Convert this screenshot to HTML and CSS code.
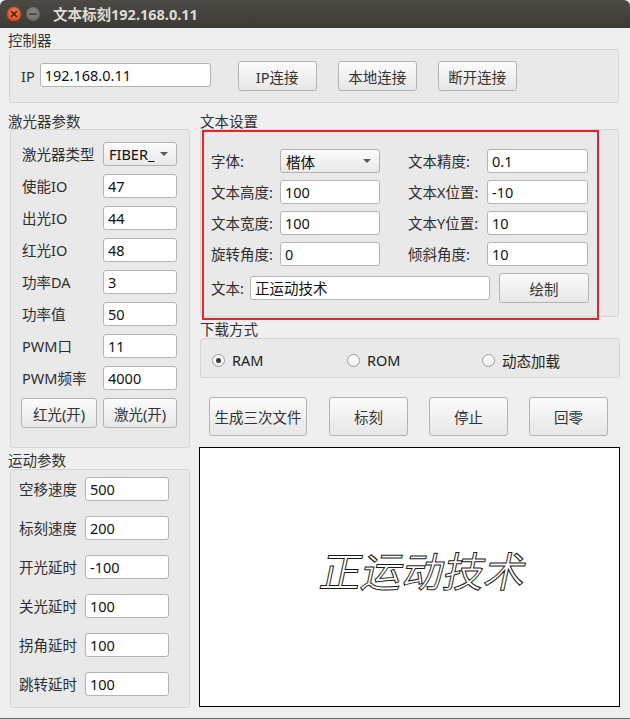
FILE: index.html
```html
<!DOCTYPE html>
<html lang="zh">
<head>
<meta charset="utf-8">
<title>文本标刻192.168.0.11</title>
<link rel="stylesheet" href="styles.css">
</head>
<body>
<div class="titlebar">
  <span class="wbtn close"><svg width="14" height="14" viewBox="0 0 14 14"><path d="M4.6 4.6 L9.4 9.4 M9.4 4.6 L4.6 9.4" stroke="#3a2a24" stroke-width="1.5" stroke-linecap="round"/></svg></span>
  <span class="wbtn min"><svg width="14" height="14" viewBox="0 0 14 14"><path d="M4 7 H10" stroke="#3b3a36" stroke-width="1.6" stroke-linecap="round"/></svg></span>
  <span class="wtitle">文本标刻192.168.0.11</span>
</div>

<div class="gtitle ctrl-title">控制器</div>
<div class="gbox ctrl">
  <span class="ip-label">IP</span>
  <div class="field ip-field">192.168.0.11</div>
  <button class="btn ctrl-btn first">IP连接</button>
  <button class="btn ctrl-btn">本地连接</button>
  <button class="btn ctrl-btn">断开连接</button>
</div>

<div class="main">
  <div class="col">
    <div class="gtitle sub">激光器参数</div>
    <div class="gbox laser">
      <span class="lbl">激光器类型</span>
      <div class="combo"><span>FIBER_</span><i class="arrow"></i></div>
      <span class="lbl">使能IO</span><div class="field">47</div>
      <span class="lbl">出光IO</span><div class="field">44</div>
      <span class="lbl">红光IO</span><div class="field">48</div>
      <span class="lbl">功率DA</span><div class="field">3</div>
      <span class="lbl">功率值</span><div class="field">50</div>
      <span class="lbl">PWM口</span><div class="field">11</div>
      <span class="lbl">PWM频率</span><div class="field">4000</div>
      <button class="btn laser-btn red">红光(开)</button>
      <button class="btn laser-btn">激光(开)</button>
    </div>

    <div class="gtitle sub2">运动参数</div>
    <div class="gbox motion">
      <span class="lbl">空移速度</span><div class="field">500</div>
      <span class="lbl">标刻速度</span><div class="field">200</div>
      <span class="lbl">开光延时</span><div class="field">-100</div>
      <span class="lbl">关光延时</span><div class="field">100</div>
      <span class="lbl">拐角延时</span><div class="field">100</div>
      <span class="lbl">跳转延时</span><div class="field">100</div>
    </div>
  </div>

  <div class="col">
    <div class="gtitle sub">文本设置</div>
    <div class="gbox textset">
      <div class="tgrid">
        <span class="lbl">字体:</span>
        <div class="combo"><span>楷体</span><i class="arrow"></i></div>
        <span class="lbl lbl2">文本精度:</span><div class="field">0.1</div>

        <span class="lbl">文本高度:</span><div class="field">100</div>
        <span class="lbl lbl2">文本X位置:</span><div class="field">-10</div>

        <span class="lbl">文本宽度:</span><div class="field">100</div>
        <span class="lbl lbl2">文本Y位置:</span><div class="field">10</div>

        <span class="lbl">旋转角度:</span><div class="field">0</div>
        <span class="lbl lbl2">倾斜角度:</span><div class="field">10</div>
      </div>
      <div class="textrow">
        <span class="lbl text-lbl">文本:</span>
        <div class="field text-field">正运动技术</div>
        <button class="btn draw-btn">绘制</button>
      </div>
      <div class="highlight"></div>
    </div>

    <div class="gtitle sub2">下载方式</div>
    <div class="gbox download">
      <label class="radio"><span class="dot checked"></span>RAM</label>
      <label class="radio"><span class="dot"></span>ROM</label>
      <label class="radio"><span class="dot"></span>动态加载</label>
    </div>

    <div class="actions">
      <button class="btn act wide">生成三次文件</button>
      <button class="btn act">标刻</button>
      <button class="btn act">停止</button>
      <button class="btn act">回零</button>
    </div>

    <div class="canvas">
      <span class="preview">正运动技术</span>
    </div>
  </div>
</div>
</body>
</html>
```

FILE: styles.css
```css
* { box-sizing: border-box; }

body {
  margin: 0;
  width: 630px;
  height: 719px;
  overflow: hidden;
  background: #efefef;
  border-bottom: 1px solid #6a6a6a;
  font-family: "Noto Sans", "Noto Sans CJK SC", sans-serif;
  font-size: 14.5px;
  color: #333;
}

/* title bar */
.titlebar {
  height: 28px;
  background: linear-gradient(#4b4a45, #3c3b37);
  border-radius: 6px 6px 0 0;
  display: flex;
  align-items: center;
  padding-left: 7px;
}
.wbtn {
  width: 14px;
  height: 14px;
  border-radius: 50%;
  display: flex;
}
.wbtn.close {
  background: radial-gradient(circle at 50% 40%, #f6835d, #e04a20 70%);
  box-shadow: 0 0 0 0.5px #9c3a1c;
}
.wbtn.min {
  margin-left: 5px;
  background: radial-gradient(circle at 50% 40%, #8d8b86, #6e6c68 70%);
  box-shadow: 0 0 0 0.5px #34332f;
}
.wtitle {
  margin-left: 13px;
  color: #dfdbd2;
  font-weight: bold;
  font-size: 14.5px;
  line-height: 18px;
}

/* group titles and boxes */
.gtitle {
  height: 17px;
  line-height: 17px;
  color: #333;
}
.ctrl-title { margin-top: 4px; padding-left: 8px; }
.sub { height: 16px; line-height: 16px; }
.sub2 { margin-top: 4px; }

.gbox {
  background: #e9e9e9;
  border: 1px solid #d5d5d5;
  border-radius: 3px;
}

.lbl {
  line-height: 24px;
  white-space: nowrap;
  color: #2e2e2e;
}

.field {
  height: 24px;
  background: #fff;
  border: 1px solid #b4b4b4;
  border-radius: 3px;
  padding-left: 4px;
  line-height: 22px;
  color: #111;
  white-space: nowrap;
  overflow: hidden;
}

.btn {
  background: linear-gradient(#fbfbfb, #e7e7e7);
  border: 1px solid #b3b3b3;
  border-radius: 3px;
  font-family: inherit;
  font-size: 14.5px;
  color: #333;
  padding: 0;
}

.combo {
  height: 24px;
  background: linear-gradient(#fbfbfb, #e8e8e8);
  border: 1px solid #b3b3b3;
  border-radius: 3px;
  display: flex;
  align-items: center;
  justify-content: space-between;
  padding: 0 8px 0 5px;
  color: #111;
  overflow: hidden;
}
.arrow {
  width: 0;
  height: 0;
  border-left: 4px solid transparent;
  border-right: 4px solid transparent;
  border-top: 4px solid #5a5a5a;
}

/* controller */
.ctrl {
  margin-left: 9px;
  width: 610px;
  height: 54px;
  display: flex;
  align-items: center;
  padding-left: 11px;
}
.ip-label { margin-right: 5px; }
.ip-field { width: 171px; margin-top: -2px; }
.ctrl-btn { width: 79px; height: 30px; margin-left: 21px; }
.ctrl-btn.first { margin-left: 27px; }

/* main area */
.main {
  display: grid;
  grid-template-columns: 182px 420px;
  column-gap: 10px;
  margin-left: 8px;
  margin-top: 10px;
}
.col { display: flex; flex-direction: column; }

.laser {
  margin-left: 2px;
  width: 180px;
  height: 319px;
  padding: 12px 0 0 11px;
  display: grid;
  grid-template-columns: 81px 74px;
  grid-auto-rows: 24px;
  row-gap: 8px;
  align-items: center;
}
.laser-btn { height: 30px; align-self: start; }
.laser-btn.red { width: 76px; margin-left: -1px; }

.motion {
  margin-left: 2px;
  width: 180px;
  height: 239px;
  padding: 7px 0 0 8px;
  display: grid;
  grid-template-columns: 66px 84px;
  grid-auto-rows: 24px;
  row-gap: 15px;
  align-content: start;
}

/* text settings */
.textset {
  position: relative;
  width: 419px;
  height: 188px;
  padding: 19px 0 0 10px;
}
.tgrid {
  display: grid;
  grid-template-columns: 69px 100px 107px 101px;
  grid-auto-rows: 24px;
  row-gap: 7px;
}
.lbl2 { padding-left: 28px; }
.textrow {
  margin-top: 7px;
  display: flex;
  align-items: center;
  height: 30px;
}
.text-lbl { width: 39px; }
.text-field { width: 240px; }
.draw-btn { width: 90px; height: 30px; margin-left: 9px; }

.highlight {
  position: absolute;
  left: 1px;
  top: 0;
  width: 397px;
  height: 190px;
  border: 2px solid #e8222a;
  pointer-events: none;
}

/* download mode */
.download {
  width: 420px;
  height: 40px;
  padding: 4px 0 0 11px;
  display: grid;
  grid-template-columns: 135px 135px 135px;
  align-items: center;
}
.radio {
  display: flex;
  align-items: center;
  gap: 7px;
  color: #222;
}
.dot {
  width: 13px;
  height: 13px;
  border-radius: 50%;
  border: 1px solid #9d9d9d;
  background: linear-gradient(#ffffff, #f0f0f0);
  display: flex;
  align-items: center;
  justify-content: center;
}
.dot.checked::after {
  content: "";
  width: 5px;
  height: 5px;
  border-radius: 50%;
  background: #3a3a3a;
}

/* actions */
.actions {
  margin-top: 19px;
  display: flex;
  padding-left: 9px;
  gap: 21px;
}
.act { width: 79px; height: 39px; }
.act.wide { width: 98px; margin-right: 1px; }

/* preview canvas */
.canvas {
  margin-top: 11px;
  margin-left: -1px;
  width: 421px;
  height: 260px;
  background: #fff;
  border: 1px solid #000;
  display: flex;
  align-items: center;
  justify-content: center;
  padding: 0 0 16px 30px;
}
.preview {
  font-family: "Noto Sans CJK SC", sans-serif;
  font-size: 41px;
  font-weight: 400;
  line-height: 1;
  color: #fff;
  -webkit-text-stroke: 1px #1a1a1a;
  transform: skewX(-12deg);
}
```
